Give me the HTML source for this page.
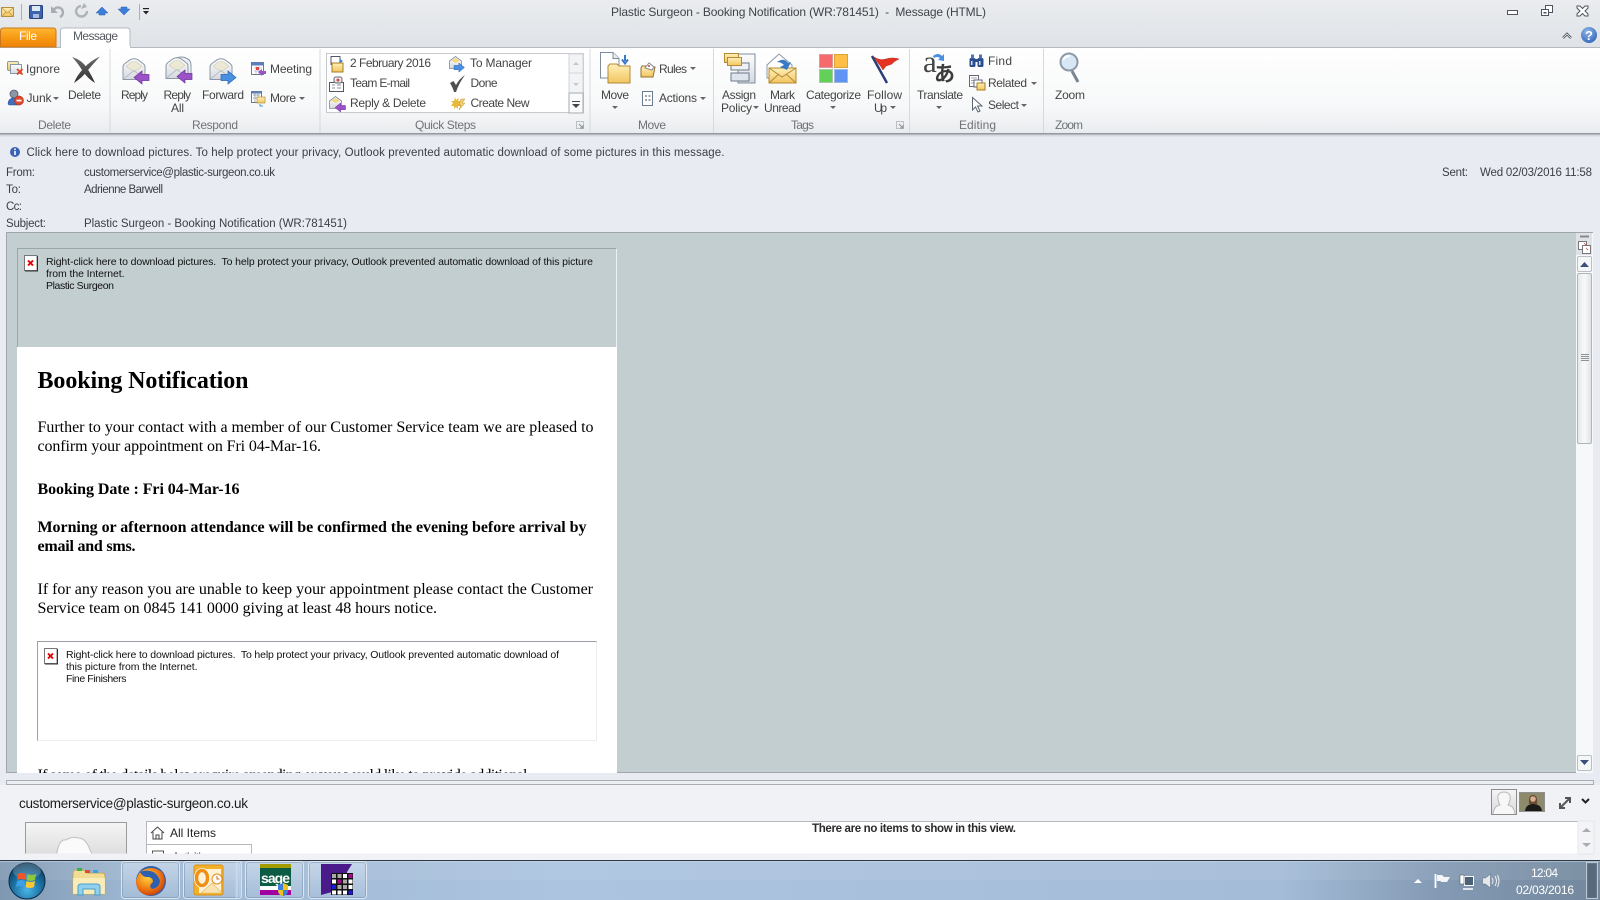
<!DOCTYPE html>
<html><head><meta charset="utf-8"><title>Plastic Surgeon - Booking Notification</title>
<style>
html,body{margin:0;padding:0;width:1600px;height:900px;overflow:hidden;background:#e8ebf1}
svg{display:block;position:absolute;left:0;top:0}
text{font-family:"Liberation Sans",sans-serif;font-size:12px;fill:#3c3c3c;white-space:pre}
.r{fill:#444}
.l{fill:#6f7276}
.h{font-size:11.5px;fill:#3a3f45}
.s{font-family:"Liberation Serif",serif;font-size:16px;fill:#000}
.b{font-weight:bold}
.i{font-size:10.5px;fill:#111}
</style></head><body>
<svg width="1600" height="900" viewBox="0 0 1600 900" xmlns="http://www.w3.org/2000/svg">
<defs>
<linearGradient id="gt" x1="0" y1="0" x2="0" y2="1"><stop offset="0" stop-color="#eaecef"/><stop offset="1" stop-color="#dfe3e7"/></linearGradient>
<linearGradient id="gr" x1="0" y1="0" x2="0" y2="1"><stop offset="0" stop-color="#fff"/><stop offset=".7" stop-color="#f7f8f9"/><stop offset="1" stop-color="#e9ecef"/></linearGradient>
<linearGradient id="gf" x1="0" y1="0" x2="0" y2="1"><stop offset="0" stop-color="#ffb733"/><stop offset=".5" stop-color="#f79a13"/><stop offset="1" stop-color="#f0820a"/></linearGradient>
<linearGradient id="ge" x1="0" y1="0" x2="0" y2="1"><stop offset="0" stop-color="#fdfdfd"/><stop offset="1" stop-color="#d5d9de"/></linearGradient>
<linearGradient id="gy" x1="0" y1="0" x2="0" y2="1"><stop offset="0" stop-color="#fff0b8"/><stop offset="1" stop-color="#f2c560"/></linearGradient>
<linearGradient id="gb" x1="0" y1="0" x2="1" y2="0"><stop offset="0" stop-color="#7f98b2"/><stop offset=".08" stop-color="#9db6d1"/><stop offset=".35" stop-color="#acc4e0"/><stop offset=".8" stop-color="#a4bcd8"/><stop offset=".9" stop-color="#849ab4"/><stop offset="1" stop-color="#73889d"/></linearGradient>
<linearGradient id="gbt" x1="0" y1="0" x2="0" y2="1"><stop offset="0" stop-color="#dbe7f4"/><stop offset="1" stop-color="#a9c1dc"/></linearGradient>
<linearGradient id="gs" x1="0" y1="0" x2="1" y2="0"><stop offset="0" stop-color="#e4e6ea"/><stop offset=".5" stop-color="#f8f9fa"/><stop offset="1" stop-color="#dfe2e6"/></linearGradient>
<linearGradient id="gx" x1="0" y1="0" x2="0" y2="1"><stop offset="0" stop-color="#6b6b6b"/><stop offset="1" stop-color="#303030"/></linearGradient>
<radialGradient id="go" cx=".5" cy=".75" r=".7"><stop offset="0" stop-color="#4bb4e8"/><stop offset=".6" stop-color="#1a6d9e"/><stop offset="1" stop-color="#0d3f63"/></radialGradient>
<radialGradient id="gfx" cx=".4" cy=".35" r=".7"><stop offset="0" stop-color="#ffd23a"/><stop offset=".6" stop-color="#f07a12"/><stop offset="1" stop-color="#c43d0c"/></radialGradient>
<radialGradient id="gh" cx=".4" cy=".3" r=".8"><stop offset="0" stop-color="#8fb5ea"/><stop offset="1" stop-color="#2f62b4"/></radialGradient>
<linearGradient id="gph" x1="0" y1="0" x2="0" y2="1"><stop offset="0" stop-color="#f5f5f5"/><stop offset="1" stop-color="#d8d8d8"/></linearGradient>

<g id="oenv"><path d="M1 9 Q1 7 3 5.5 L8 1.8 Q12 -.2 16 1.8 L21 5.5 Q23 7 23 9 V21.5 H1Z" fill="url(#ge)" stroke="#8b97a6"/><path d="M4 8.500 L9 4 Q12 2.500 15 4 L20 8.500 L12 13.500Z" fill="#ece8d6" stroke="#cfcaB6" stroke-width=".6"/><path d="M1.500 21 L12 12.500 L22.500 21" fill="none" stroke="#b5bdc6"/></g>
<path id="apl" d="M0 6.500 L8 0 V3.500 H15 V9.500 H8 V13Z" fill="#9b52c9" stroke="#6f2f9a" stroke-width=".7"/>
<path id="abr" d="M15 6.500 L7 0 V3.500 H0 V9.500 H7 V13Z" fill="#4a90e2" stroke="#2b62b0" stroke-width=".7"/>
<g id="senv"><path d="M.5 5 L6.500 .5 L12.500 5 V12.500 H.5Z" fill="url(#ge)" stroke="#7f8da0" stroke-width=".8"/><path d="M2.500 4.500 L6.500 2 L10.500 4.500 L6.500 7Z" fill="#f7d878"/></g>
<path id="car" d="M0 0 H6 L3 3Z" fill="#666"/>
<g id="bx"><rect x=".5" y=".5" width="12.500" height="15" fill="#fff" stroke="#777"/><path d="M13.500 1 V16 H1" fill="none" stroke="#333"/><path d="M4 5.500 L9 10.500 M9 5.500 L4 10.500" stroke="#e00000" stroke-width="1.900"/></g>
<g id="tb"><rect x=".5" y=".5" width="58" height="37" rx="3" fill="url(#gbt)" fill-opacity=".55" stroke="#e4edf7" stroke-opacity=".85"/><rect x="1.500" y="1.500" width="56" height="35" rx="2" fill="none" stroke="#5d7690" stroke-opacity=".35"/></g>
</defs>

<!-- title area -->
<rect width="1600" height="48" fill="url(#gt)"/>
<rect x="0" y="133" width="1600" height="767" fill="#e8ebf1"/>
<rect x="0" y="47" width="1600" height="86" fill="url(#gr)"/>
<rect x="0" y="47" width="1600" height="1" fill="#b6babf"/>
<rect x="0" y="133" width="1600" height="1.500" fill="#94999e"/>
<rect x="0" y="134.500" width="1600" height="2" fill="#d4d8de"/>

<!-- QAT -->
<g transform="translate(1,7)"><rect x=".5" y=".5" width="12" height="9" fill="url(#gy)" stroke="#b78e3c"/><path d="M1 1 L6.500 6 L12 1 M1 9.500 L5 5 M12 9.500 L8 5" fill="none" stroke="#c79a48" stroke-width=".8"/></g>
<rect x="21" y="4" width="1" height="16" fill="#a9aeb4"/>
<g transform="translate(29,5)"><rect x=".5" y=".5" width="13" height="13" rx="1" fill="#3e63b0" stroke="#24427c"/><rect x="3" y="1" width="8" height="5" fill="#dfe9f6"/><rect x="4" y="9" width="6" height="4" fill="#a9bbd8"/></g>
<path d="M53 12 A5 5 0 1 1 60 17" fill="none" stroke="#a8adb3" stroke-width="2.400"/><path d="M51 6 V13 H58Z" fill="#a8adb3"/>
<path d="M87 11 A5.500 5.500 0 1 1 76 11 A5.500 5.500 0 0 1 81 6" fill="none" stroke="#aeb3b8" stroke-width="2.400"/><path d="M84 3 L87 7 L81 9Z" fill="#aeb3b8"/>
<path d="M102 7 L108 13 H105 V15 H99 V13 H96Z" fill="#3c7fdb" stroke="#2a60b0" stroke-width=".5"/>
<path d="M124 15 L130 9 H127 V7 H121 V9 H118Z" fill="#3c7fdb" stroke="#2a60b0" stroke-width=".5"/>
<rect x="139" y="4" width="1" height="16" fill="#a9aeb4"/>
<rect x="143" y="8" width="6" height="1.200" fill="#222"/><path d="M143 11 H149 L146 14.500Z" fill="#222"/>

<text x="611" y="16" textLength="375" style="fill:#3f4449">Plastic Surgeon - Booking Notification (WR:781451)  -  Message (HTML)</text>

<!-- window controls -->
<rect x="1507.500" y="10.500" width="10" height="4" fill="#fff" stroke="#4e5460"/>
<g fill="#fff" stroke="#4e5460"><rect x="1545.500" y="5.500" width="7" height="7"/><rect x="1541.500" y="9.500" width="7" height="6"/></g><rect x="1543.500" y="12" width="3" height="1.500" fill="#4e5460"/>
<path d="M1577 6 h3 l2.500 2.500 l2.500 -2.500 h3 v2 l-3 3 l3 3 v2 h-3 l-2.500 -2.500 l-2.500 2.500 h-3 v-2 l3 -3 l-3 -3z" fill="#fff" stroke="#4e5460"/>
<path d="M1563 38 l4 -4 l4 4" fill="none" stroke="#4e5460" stroke-width="2.400"/><path d="M1563 38 l4 -4 l4 4" fill="none" stroke="#fff" stroke-width=".7"/>
<circle cx="1589" cy="35" r="8" fill="url(#gh)"/><text x="1585" y="40" style="font-size:13px;font-weight:bold;fill:#fff">?</text>

<!-- tabs -->
<path d="M0.500 47 V31 Q.5 28 3.500 28 H53 Q56 28 56 31 V47Z" fill="url(#gf)" stroke="#c9791a"/>
<text x="19" y="40" textLength="18" style="fill:#fff">File</text>
<path d="M60.500 48 V31 Q60.500 28 63.500 28 H127 Q130 28 130 31 V47.500" fill="#fff" stroke="#b6babf"/>
<rect x="61" y="46" width="69" height="3" fill="#fff"/>
<text x="73" y="40" textLength="45" style="fill:#555a60">Message</text>

<!-- group seps -->
<g fill="#d6d9dd"><rect x="109.500" y="49" width="1" height="84"/><rect x="319.500" y="49" width="1" height="84"/><rect x="589.500" y="49" width="1" height="84"/><rect x="713" y="49" width="1" height="84"/><rect x="909" y="49" width="1" height="84"/><rect x="1043" y="49" width="1" height="84"/></g>

<!-- Delete group -->
<g transform="translate(7,61)"><rect x="0.500" y="0.500" width="11" height="9" rx="1.500" fill="url(#gy)" stroke="#8b97a6"/><rect x="3.500" y="3.500" width="11" height="9" fill="url(#ge)" stroke="#8b97a6"/><path d="M10 8 l5.500 5.500 M15.500 8 l-5.500 5.500" stroke="#e0452c" stroke-width="1.800"/></g>
<text class="r" x="26" y="73" textLength="34">Ignore</text>
<circle cx="14" cy="94" r="4" fill="#8c97a6" stroke="#4f5b6b" stroke-width=".8"/><path d="M8 104 Q8 98 14 98 Q19 98 20 102 L18 105 H9Z" fill="#3f6fc0" stroke="#2d4f8e" stroke-width=".5"/><circle cx="19" cy="100.500" r="4.500" fill="#e24a2e" stroke="#b8341e" stroke-width=".7"/><rect x="16.500" y="99.700" width="5" height="1.700" fill="#fff"/>
<text class="r" x="26.500" y="102" textLength="25">Junk</text><use href="#car" x="53" y="97"/>
<path d="M72 57 Q82 60 87 68 Q92 76 95 83 Q87 78 82 70 Q77 62 72 57Z" fill="url(#gx)"/>
<path d="M100 56.500 Q90 61 84 68 Q77 75 74 83 Q83 77 88 70 Q94 63 100 56.500Z" fill="url(#gx)"/>
<text class="r" x="68" y="99" textLength="33">Delete</text>
<text class="l" x="38" y="129" textLength="33">Delete</text>

<!-- Respond -->
<g transform="translate(122,58)"><use href="#oenv"/><use href="#apl" x="12" y="13"/></g>
<text class="r" x="121" y="99" textLength="27">Reply</text>
<g transform="translate(165,57)"><path d="M11 1 Q17 -1 21 1 Q26 3 26 8 V20 H14Z" fill="#eef0f3" stroke="#8b97a6"/><use href="#oenv"/><use href="#apl" x="12" y="13"/></g>
<text class="r" x="163.500" y="99" textLength="27.500">Reply</text><text class="r" x="171" y="112" textLength="13">All</text>
<g transform="translate(209,58)"><use href="#oenv"/><use href="#abr" x="12" y="13"/></g>
<text class="r" x="202" y="99" textLength="42">Forward</text>
<g transform="translate(251,61)"><rect x=".5" y="1.500" width="12" height="12" fill="#fff" stroke="#6b7a8c"/><rect x=".5" y="1.500" width="12" height="3" fill="#5a7fc0"/><path d="M3 7h8M3 10h8M5 5v8M8 5v8" stroke="#b0b8c4" stroke-width=".7"/><rect x="5" y="6" width="3" height="3" fill="#d44"/><path d="M7 11 l4 -3 v2 h4 v3 h-4 v2z" fill="#9b52c9"/></g>
<text class="r" x="270" y="73" textLength="42">Meeting</text>
<g transform="translate(251,90)"><rect x=".5" y="1.500" width="10" height="11" fill="#fff" stroke="#6b7a8c"/><rect x=".5" y="1.500" width="10" height="2" fill="#5a7fc0"/><path d="M2 5h7M2 8h7M4 2v10M7 2v10" stroke="#8a94a2" stroke-width=".7"/><rect x="6" y="7" width="8" height="6" fill="url(#gy)" stroke="#b78e3c" stroke-width=".7"/><path d="M9 14 v2 h3" fill="none" stroke="#4a90e2"/></g>
<text class="r" x="270" y="102" textLength="26">More</text><use href="#car" x="299" y="97"/>
<text class="l" x="192" y="129" textLength="46">Respond</text>

<!-- Quick steps -->
<rect x="326.500" y="53.500" width="257" height="59" fill="#fff" stroke="#c6cace"/>
<g fill="#f1f3f5" stroke="#d2d6da"><rect x="569" y="54" width="14" height="19"/><rect x="569" y="73" width="14" height="20"/></g>
<rect x="569" y="93" width="14" height="20" fill="#fafbfc" stroke="#a6abb1"/>
<path d="M573 65 l3 -3 l3 3z" fill="#c4c8cc"/><path d="M573 83 l3 3 l3 -3z" fill="#c4c8cc"/>
<rect x="572" y="101" width="8" height="1" fill="#444"/><path d="M572 104 h8 l-4 4z" fill="#444"/>
<g transform="translate(329,56)"><rect x="2" y=".5" width="9" height="8" fill="#fff" stroke="#556"/><path d="M11 3 l3 2 l-3 2z" fill="#3a78c8"/><rect x="3" y="7" width="11" height="9" fill="url(#gy)" stroke="#a47d26"/></g>
<text class="r" x="350" y="67" textLength="81">2 February 2016</text>
<g transform="translate(329,76)"><rect x=".5" y="6.500" width="14" height="9" fill="#fff" stroke="#556"/><path d="M3 9h3M3 12h3M8 9h4M8 12h4" stroke="#667" stroke-width=".8"/><rect x="5" y="1" width="8" height="6" rx="2" fill="url(#ge)" stroke="#667"/><circle cx="9" cy="4" r="1.500" fill="#d44"/></g>
<text class="r" x="350" y="87" textLength="60">Team E-mail</text>
<g transform="translate(329,96)"><use href="#senv"/><use href="#apl" transform="translate(6,7) scale(.7)"/></g>
<text class="r" x="350" y="107" textLength="76">Reply &amp; Delete</text>
<g transform="translate(449,56)"><use href="#senv"/><use href="#abr" transform="translate(5,7) scale(.7)"/></g>
<text class="r" x="470" y="67" textLength="62">To Manager</text>
<path d="M450 83 L453.500 81 L456 85 Q459 79 465 75 Q459 83 456 92 H454 Q453 88 450 83Z" fill="#4f4f4f"/>
<text class="r" x="470.500" y="87" textLength="27">Done</text>
<g transform="translate(451,97)"><path d="M4 0 l1 3 l3 -2 l-1 3 l4 0 l-3 2 l2 3 h-3 l0 3 l-2 -2 l-2 2 l0 -3 h-3 l2 -3 l-2 -2 h3z" fill="#e9b93c"/><path d="M10 2 h4 l-3 4 h3 l-6 7 l2 -5 h-2z" fill="#f2d26b" stroke="#b78e3c" stroke-width=".5"/></g>
<text class="r" x="470.500" y="107" textLength="59">Create New</text>
<text class="l" x="415" y="129" textLength="61">Quick Steps</text>
<g stroke="#8c9197" fill="none"><path d="M576.500 121.500 h7 v7 h-7z" stroke="#bcc0c4"/><path d="M579 124 l4 4 M583 125 v3 h-3"/></g>

<!-- Move -->
<g transform="translate(600,52)"><path d="M.5 .5 H13 L19 6.500 V26 H.5Z" fill="#fff" stroke="#7d8da0"/><path d="M13 .5 V6.500 H19" fill="#e8edf3" stroke="#7d8da0"/><path d="M8 14 L10 12 H17 L19 14 H30 V31 H8Z" fill="url(#gy)" stroke="#b38a35"/><path d="M25 3 V9 M22 7.500 l3 4 l3 -4" fill="none" stroke="#3a78c8" stroke-width="2"/></g>
<text class="r" x="601" y="99" textLength="28">Move</text><use href="#car" x="612" y="106"/>
<g transform="translate(640,61)"><path d="M1 7 L2 5 H7 L8 6 H14 L15 6 L13 16 H1Z" fill="url(#gy)" stroke="#8f7130"/><path d="M5 7 l4 -5 l5 4 l-2 3z" fill="#fff" stroke="#889"/><circle cx="9" cy="5" r="1" fill="#c44"/></g>
<text class="r" x="659" y="73" textLength="28">Rules</text><use href="#car" x="690" y="67"/>
<g transform="translate(642,91)"><rect x=".5" y=".5" width="10" height="14" fill="#fff" stroke="#6b7a8c"/><path d="M3 5h2M6.500 5h2M3 9h2M6.500 9h2" stroke="#3b4a5c"/></g>
<text class="r" x="659" y="102" textLength="38">Actions</text><use href="#car" x="700" y="97"/>
<text class="l" x="638" y="129" textLength="28">Move</text>

<!-- Tags -->
<g transform="translate(724,53)"><rect x="14" y="1" width="17" height="29" fill="url(#ge)" stroke="#7d8da0"/><rect x="7" y="10" width="18" height="7" fill="#eef1f5" stroke="#6b7a8c"/><rect x="7" y="20" width="18" height="8" fill="#dfe5ec" stroke="#6b7a8c"/><rect x="0.500" y=".5" width="14" height="9" fill="url(#gy)" stroke="#b38a35"/><rect x="3.500" y="4.500" width="14" height="8" fill="url(#gy)" stroke="#b38a35"/></g>
<text class="r" x="722" y="99" textLength="34">Assign</text><text class="r" x="721" y="112" textLength="31">Policy</text><use href="#car" x="753" y="106"/>
<g transform="translate(766,53)"><path d="M1 12 L13 1 L26 12 V25 H1Z" fill="#fff" stroke="#8b97a6"/><rect x="3" y="15" width="27" height="15" fill="url(#gy)" stroke="#b38a35"/><path d="M3 15 L16 24 L30 15 M3 30 L13 21 M30 30 L20 21" fill="none" stroke="#b38a35"/><path d="M11 9 Q18 4 22 10 L25 9 L21 17 L14 14 L18 12 Q15 9 11 9Z" fill="#3a78c8"/></g>
<text class="r" x="770" y="99" textLength="25">Mark</text><text class="r" x="764" y="112" textLength="37">Unread</text>
<rect x="819.500" y="54.500" width="13" height="13" fill="#f56b6b" stroke="#d99"/><rect x="834.500" y="54.500" width="13" height="13" fill="#ffbe45" stroke="#d9a33b"/><rect x="819.500" y="69.500" width="13" height="13" fill="#63d159" stroke="#a9c9a4"/><rect x="834.500" y="69.500" width="13" height="13" fill="#5f94f5" stroke="#a1b9db"/>
<text class="r" x="806" y="99" textLength="55">Categorize</text><use href="#car" x="830" y="106"/>
<path d="M872 56 L887 83" stroke="#2a3f78" stroke-width="2.500"/><path d="M874 57 Q880 61 886 59 Q892 57 899 59 Q893 62 892 64 L886 66 L883 70 Q880 65 878 63Z" fill="#e63222" stroke="#b3271a" stroke-width=".5"/>
<text class="r" x="867" y="99" textLength="35">Follow</text><text class="r" x="874" y="112" textLength="13">Up</text><use href="#car" x="890" y="106"/>
<text class="l" x="791" y="129" textLength="23">Tags</text>
<g stroke="#8c9197" fill="none"><path d="M896.500 121.500 h7 v7 h-7z" stroke="#bcc0c4"/><path d="M899 124 l4 4 M903 125 v3 h-3"/></g>

<!-- Editing -->
<text x="923" y="72" style="font-family:'Liberation Serif',serif;font-size:31px;fill:#444">a</text>
<text x="934" y="81" style="font-family:'Liberation Sans','Noto Sans CJK JP',sans-serif;font-size:21px;font-weight:bold;fill:#3c3c3c">あ</text>
<path d="M933 56 Q938 52 942 56 L944 54 L944 61 L938 60 L940 58 Q937 56 934 58Z" fill="#4a8fe0"/>
<text class="r" x="917" y="99" textLength="46">Translate</text><use href="#car" x="936" y="106"/>
<g transform="translate(969,54)" fill="#2d4f8e"><rect x="0.500" y="4" width="6" height="9" rx="1.500"/><rect x="8.500" y="4" width="6" height="9" rx="1.500"/><rect x="5.500" y="5" width="4" height="3"/><rect x="2" y="0.500" width="3" height="4" fill="#4f74b5"/><rect x="10" y="0.500" width="3" height="4" fill="#4f74b5"/><rect x="2" y="7" width="1.500" height="4" fill="#cfe0f5"/><rect x="10" y="7" width="1.500" height="4" fill="#cfe0f5"/></g>
<text class="r" x="988" y="65" textLength="24">Find</text>
<g transform="translate(969,75)"><rect x=".5" y=".5" width="9" height="11" fill="#fff" stroke="#667"/><path d="M2 3h6M2 5.500h6M2 8h6" stroke="#889" stroke-width=".7"/><rect x="5" y="5" width="8" height="7" fill="#fff" stroke="#667"/><rect x="8" y="8" width="8" height="7" fill="url(#gy)" stroke="#a47d26"/></g>
<text class="r" x="988" y="87" textLength="39">Related</text><use href="#car" x="1031" y="82"/>
<path d="M972.500 97.500 V110 L975.500 107 L978 112 L980 111 L977.500 106 L982 106Z" fill="#fff" stroke="#596575"/>
<text class="r" x="988" y="109" textLength="31">Select</text><use href="#car" x="1021" y="104"/>
<text class="l" x="959" y="129" textLength="37">Editing</text>

<!-- Zoom -->
<circle cx="1069" cy="62" r="8.500" fill="#d7e7f5" stroke="#8d99a6" stroke-width="2"/><path d="M1072 71 L1078 82" stroke="#7a8592" stroke-width="3"/><path d="M1063 60 Q1065 56 1070 56" fill="none" stroke="#fff" stroke-width="2"/>
<text class="r" x="1055" y="99" textLength="30">Zoom</text>
<text class="l" x="1055" y="129" textLength="28">Zoom</text>

<!-- Header info -->
<circle cx="15" cy="152" r="5" fill="#3d62b4"/><rect x="14.200" y="148.500" width="1.600" height="1.600" fill="#fff"/><rect x="14.200" y="151" width="1.600" height="4" fill="#fff"/>
<text class="h" x="26.500" y="156" textLength="698">Click here to download pictures. To help protect your privacy, Outlook prevented automatic download of some pictures in this message.</text>
<text class="h" x="6" y="176" textLength="29">From:</text><text class="h" x="84" y="176" textLength="191">customerservice@plastic-surgeon.co.uk</text>
<text class="h" x="6" y="193" textLength="15">To:</text><text class="h" x="84" y="193" textLength="79">Adrienne Barwell</text>
<text class="h" x="6" y="210" textLength="16">Cc:</text>
<text class="h" x="6" y="227" textLength="40">Subject:</text><text class="h" x="84" y="227" textLength="263">Plastic Surgeon - Booking Notification (WR:781451)</text>
<text class="h" x="1442" y="176" textLength="26">Sent:</text><text class="h" x="1480" y="176" textLength="112">Wed 02/03/2016 11:58</text>

<!-- Message pane -->
<rect x="6.500" y="232.500" width="1586" height="540" fill="#c3ced1" stroke="#9fa5ab"/>
<rect x="17.500" y="248.500" width="599" height="99" fill="#c3ced1" stroke="#9ba6aa"/>
<path d="M616.500 248.500 V347.500" stroke="#eef1f2"/>
<rect x="17" y="347" width="600" height="426" fill="#fff"/>
<use href="#bx" x="24" y="255"/>
<text class="i" x="46" y="265" textLength="547">Right-click here to download pictures.  To help protect your privacy, Outlook prevented automatic download of this picture</text>
<text class="i" x="46" y="277" textLength="78.500">from the Internet.</text>
<text class="i" x="46" y="289" textLength="68">Plastic Surgeon</text>

<text x="37.500" y="388" textLength="211" style="font-family:'Liberation Serif',serif;font-size:24px;font-weight:bold;fill:#000">Booking Notification</text>
<text class="s" x="37.500" y="432" textLength="556">Further to your contact with a member of our Customer Service team we are pleased to</text>
<text class="s" x="37.500" y="451" textLength="283.500">confirm your appointment on Fri 04-Mar-16.</text>
<text class="s b" x="37.500" y="494" textLength="202">Booking Date : Fri 04-Mar-16</text>
<text class="s b" x="37.500" y="532" textLength="549">Morning or afternoon attendance will be confirmed the evening before arrival by</text>
<text class="s b" x="37.500" y="551" textLength="98">email and sms.</text>
<text class="s" x="37.500" y="594" textLength="555.500">If for any reason you are unable to keep your appointment please contact the Customer</text>
<text class="s" x="37.500" y="613" textLength="399.500">Service team on 0845 141 0000 giving at least 48 hours notice.</text>

<rect x="37.500" y="641.500" width="559" height="99" fill="#fff" stroke="#eceeee"/>
<path d="M37.500 740.500 V641.500 H596.500" fill="none" stroke="#9aa0a5"/>
<use href="#bx" x="44" y="648"/>
<text class="i" x="66" y="658" textLength="493">Right-click here to download pictures.  To help protect your privacy, Outlook prevented automatic download of</text>
<text class="i" x="66" y="670" textLength="131.500">this picture from the Internet.</text>
<text class="i" x="66" y="682" textLength="60.500">Fine Finishers</text>

<text class="s" x="37.500" y="780" textLength="490">If some of the details below require amending or you would like to provide additional</text>

<!-- scrollbar -->
<rect x="1576" y="233" width="17" height="540" fill="#f7f8f9"/>
<rect x="1576" y="233" width="16" height="22" fill="#dfe3e9"/>
<rect x="1580" y="235.500" width="9" height="2" fill="#888"/>
<g transform="translate(1578,241)"><rect x=".5" y=".5" width="8" height="8" fill="#fff" stroke="#777"/><rect x="4.500" y="4.500" width="8" height="8" fill="#fff" stroke="#777"/><path d="M6 2 l3 3 M8 7 l2 2" stroke="#b55" stroke-width=".8"/></g>
<rect x="1577.500" y="256.500" width="14" height="15" rx="1.500" fill="#f5f6f7" stroke="#b9bfc5"/><path d="M1580 267 l4.500 -5 l4.500 5z" fill="#3c4f7c"/>
<rect x="1577.500" y="273.500" width="14" height="170" rx="1.500" fill="url(#gs)" stroke="#b0b5bb"/>
<path d="M1581 354.500 h8 M1581 356.500 h8 M1581 358.500 h8 M1581 360.500 h8" stroke="#8d9196"/>
<rect x="1577.500" y="755.500" width="14" height="15" rx="1.500" fill="#f5f6f7" stroke="#b9bfc5"/><path d="M1580 760 l4.500 5 l4.500 -5z" fill="#3c4f7c"/>

<!-- below pane -->
<rect x="0" y="773" width="1600" height="8" fill="#e8ebf1"/>
<rect x="6.500" y="780.500" width="1587" height="4" fill="#eceef1" stroke="#a9aeb4"/>
<rect x="0" y="785" width="1600" height="75" fill="#f0f2f5"/>
<text x="19" y="808" textLength="229" style="font-size:13.500px;fill:#1c1c1c">customerservice@plastic-surgeon.co.uk</text>
<rect x="25.500" y="822.500" width="101" height="40" fill="url(#gph)" stroke="#9b9b9b"/>
<path d="M56 860 Q58 838 66 840 Q72 836 78 838 Q86 838 90 850 L96 860Z" fill="#fafafa" stroke="#c0c0c0"/>
<rect x="146" y="821" width="1432.500" height="33" fill="#fff"/>
<path d="M146.500 854 V821.500 H1578" fill="none" stroke="#b5b9be"/>
<path d="M146.500 844.500 H251.500 V860" fill="none" stroke="#b5b9be"/>
<path d="M151 833 L157.500 827 L164 833 M153 832 V839 H162 V832 M156 839 V835 H159 V839" fill="none" stroke="#444"/>
<text x="170" y="837" textLength="46" style="fill:#222">All Items</text>
<rect x="152.500" y="851" width="11" height="10" fill="#fff" stroke="#555"/>
<text x="172" y="861" textLength="40" style="fill:#222">Activities</text>
<rect x="0" y="853.500" width="1578" height="7" fill="#f0f2f5"/>
<text x="812" y="832" textLength="204" style="font-size:11.500px;font-weight:bold;fill:#2b2b2b">There are no items to show in this view.</text>
<rect x="1578" y="821" width="16" height="33" fill="#f2f4f6" stroke="#e4e6e9"/>
<path d="M1582 832 l4.500 -4 l4.500 4z" fill="#a9adb2"/><path d="M1582 843 l4.500 4 l4.500 -4z" fill="#a9adb2"/>
<rect x="1491.500" y="789.500" width="25" height="25" fill="url(#gph)" stroke="#8c8c8c"/><path d="M1493 814 Q1494 806 1500 805 Q1497 799 1498 796 Q1499 792 1504 792 Q1509 792 1510 796 Q1511 800 1508 805 Q1514 806 1515 814" fill="#f7f7f7" stroke="#b9b9b9"/>
<rect x="1519.500" y="792.500" width="25" height="19" fill="#8d8a6c" stroke="#8f8f8f"/><path d="M1529 804 Q1528 795 1533 795 Q1538 795 1537 804Z" fill="#6a4a30"/><circle cx="1533" cy="799" r="2.800" fill="#d8b090"/><path d="M1525 811 Q1526 804 1533 804 Q1541 804 1542 811Z" fill="#1c1a18"/>
<path d="M1560 808 l10 -10 M1565 798 h5 v5 M1560 803 v5 h5" fill="none" stroke="#555" stroke-width="2"/>
<path d="M1582 799 l3.500 3.500 l3.500 -3.500" fill="none" stroke="#222" stroke-width="2"/>

<!-- taskbar -->
<rect x="0" y="860" width="1600" height="40" fill="url(#gb)"/>
<rect x="0" y="860" width="1600" height="1" fill="#2a3644"/>
<rect x="0" y="861" width="1600" height="1" fill="#cddaea" opacity=".6"/>
<rect x="0" y="862" width="1600" height="18" fill="#fff" opacity=".07"/>
<circle cx="27" cy="881" r="18" fill="url(#go)" stroke="#0c2c44"/>
<ellipse cx="27" cy="871" rx="14" ry="8" fill="#fff" opacity=".2"/>
<path d="M18 874 Q22 872 26 874 L25 880 Q21 878 17 880Z" fill="#f2552a"/><path d="M27.500 874 Q31 876 36 874 L35 880 Q31 882 26.500 880Z" fill="#8dc63f"/><path d="M17 881 Q21 879 25 881 L24 887 Q20 885 16 887Z" fill="#3aa0e8"/><path d="M26.500 881 Q31 883 35 881 L34 887 Q30 889 25.500 887Z" fill="#fdc82f"/>
<path d="M73 873 Q73 870 76 870 H84 L87 873 H102 Q105 873 105 876 V894 H73Z" fill="#f2dd95" stroke="#bfa75e"/><rect x="77" y="868" width="5" height="3" fill="#36b34a"/><rect x="85" y="870" width="5" height="3" fill="#e04a3a"/><rect x="93" y="870" width="5" height="3" fill="#3aa0e8"/>
<path d="M73 878 H105 V894 H73Z" fill="#fbeebf" opacity=".85"/><path d="M78 895 V887 Q78 884 81 884 H97 Q100 884 100 887 V895 H95 V889 H83 V895Z" fill="#8fd0ee" stroke="#4a9fc9"/>
<use href="#tb" x="121" y="861"/><use href="#tb" x="183" y="861"/>
<rect x="235.500" y="861" width="2.500" height="37" rx="1" fill="#cfdded" opacity=".6"/><rect x="239.500" y="861" width="2.500" height="37" rx="1" fill="#cfdded" opacity=".6"/>
<use href="#tb" x="245" y="861"/><use href="#tb" x="308" y="861"/>
<circle cx="151" cy="881" r="15" fill="#2f5fb0"/><path d="M140 872 Q151 864 162 872 Q167 880 163 888 Q156 897 146 895 Q136 892 136 881 Q137 876 140 872 Q143 878 149 877 Q153 878 153 882 Q148 886 152 889 Q159 888 160 881 Q157 872 150 871 Q144 870 140 872Z" fill="url(#gfx)"/>
<rect x="194" y="865" width="29" height="30" rx="2" fill="#f5b02a" stroke="#d9921a"/><rect x="199" y="869" width="22" height="24" fill="#fff2d4"/><path d="M201 893 L212 883 L222 893Z" fill="#f8e2b0" stroke="#e5b560" stroke-width=".6"/><circle cx="217" cy="879" r="5" fill="#fff" stroke="#e28a17"/><path d="M217 876 v3 h2.500" fill="none" stroke="#c8701a"/><ellipse cx="202" cy="878" rx="5.500" ry="7.500" fill="none" stroke="#fff" stroke-width="5"/><ellipse cx="202" cy="878" rx="5.500" ry="7.500" fill="none" stroke="#ef8f14" stroke-width="3.500"/>
<rect x="260" y="864" width="31" height="31" fill="#fff"/><rect x="260" y="864" width="31" height="4" fill="#a39b00"/><rect x="260" y="868" width="31" height="18" fill="#0b5c44"/><rect x="260" y="890" width="31" height="5" fill="#a000a0"/>
<text x="261" y="883" textLength="29" style="font-size:14px;font-weight:bold;fill:#fff">sage</text>
<path d="M278 885 l5 -2 l5 2 v6 q0 4 -5 5 q-5 -1 -5 -5z" fill="#3c7fd9"/><path d="M283 883 l5 2 v5 h-5z" fill="#f2c21c"/><path d="M278 890 h5 v6 q-5 -1 -5 -6z" fill="#f2c21c"/>
<path d="M321 864 H352 L347 872 V888 L321 895Z" fill="#4a1a8a"/>
<g transform="translate(331,873)"><rect width="22" height="22" fill="#111"/>
<g fill="#fff"><rect x="1" y="1" width="4" height="4" fill="#aaa"/><rect x="6.500" y="1" width="4" height="4" fill="#aaa"/><rect x="12" y="1" width="4" height="4" fill="#fff"/><rect x="17.500" y="1" width="4" height="4" fill="#a0108a"/>
<rect x="1" y="6.500" width="4" height="4"/><rect x="6.500" y="6.500" width="4" height="4" fill="#a0108a"/><rect x="12" y="6.500" width="4" height="4" fill="#aaa"/><rect x="17.500" y="6.500" width="4" height="4"/>
<rect x="1" y="12" width="4" height="4" fill="#1a1ae0"/><rect x="6.500" y="12" width="4" height="4" fill="#aaa"/><rect x="12" y="12" width="4" height="4" fill="#aaa"/><rect x="17.500" y="12" width="4" height="4"/>
<rect x="1" y="17.500" width="4" height="4"/><rect x="6.500" y="17.500" width="4" height="4"/><rect x="12" y="17.500" width="4" height="4"/><rect x="17.500" y="17.500" width="4" height="4" fill="#1a1ae0"/></g></g>

<!-- tray -->
<path d="M1414 883 l4 -4 l4 4z" fill="#fff"/>
<path d="M1435.500 874 V888" stroke="#fff" stroke-width="1.800"/><path d="M1437 875 H1442 L1444 877 H1450 L1447 882 H1442 L1440 881 H1437Z" fill="#f3f5f7"/>
<rect x="1464.500" y="876.500" width="9" height="9" fill="#4d6175" stroke="#fff"/><rect x="1460" y="875" width="4" height="9" fill="#fff" stroke="#3c4e60" stroke-width=".5"/><path d="M1463 889 h10" stroke="#fff" stroke-width="1.500"/>
<path d="M1482.500 878 h3 l5 -4 v14 l-5 -4 h-3z" fill="#e4e8ec" stroke="#5a6a7a" stroke-width=".5"/><path d="M1492 878 q2 3 0 6 M1495 876 q3 5 0 10 M1497.500 875 q3 6 0 12" fill="none" stroke="#eef1f4"/>
<text x="1531" y="877" textLength="27" style="fill:#fff">12:04</text>
<text x="1516" y="894" textLength="58" style="fill:#fff">02/03/2016</text>
<rect x="1586.500" y="862.500" width="11" height="36" fill="#6f8295" stroke="#d8e2ec" stroke-opacity=".7"/>
<rect x="1587.500" y="863.500" width="9" height="34" fill="#2e3c4a" opacity=".35"/>
</svg>
</body></html>
